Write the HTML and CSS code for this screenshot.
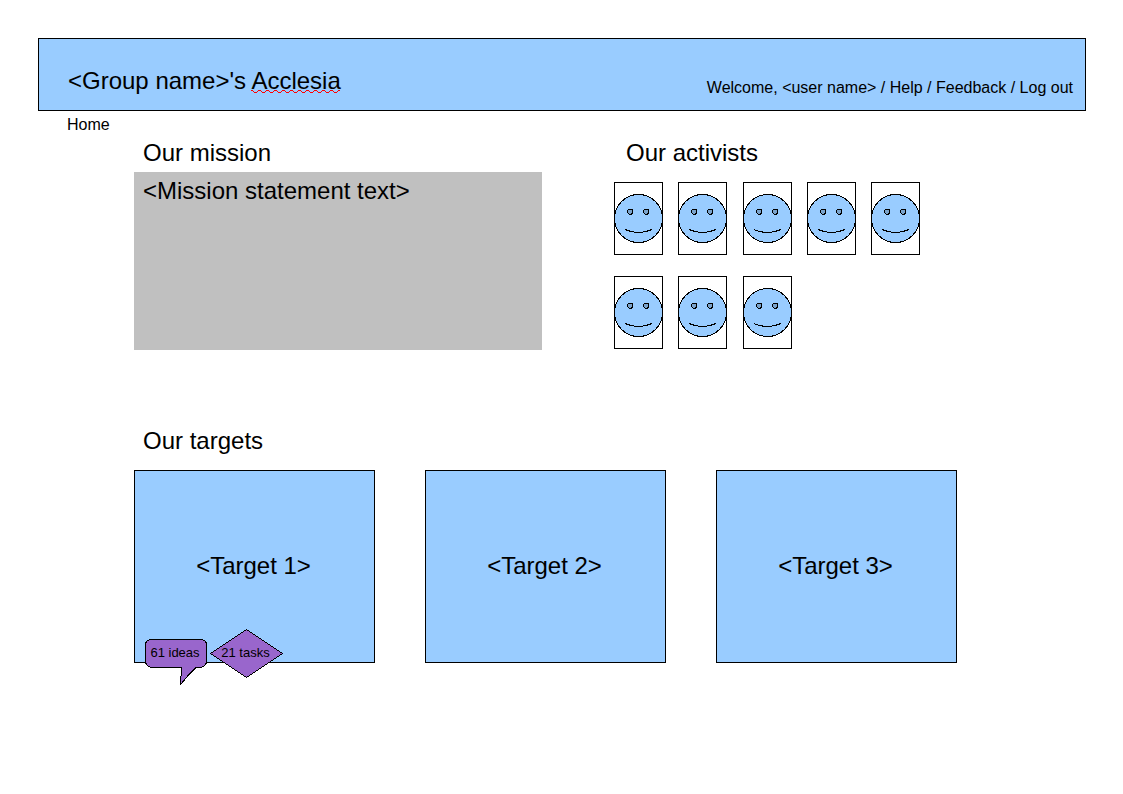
FILE: index.html
```html
<!DOCTYPE html>
<html lang="en">
<head>
<meta charset="utf-8">
<meta name="viewport" content="width=device-width, initial-scale=1">
<title>Acclesia</title>
<link rel="stylesheet" href="styles.css">
</head>
<body>
<svg class="defs" width="0" height="0" aria-hidden="true">
  <symbol id="face" viewBox="0 0 49 49">
    <circle cx="24.5" cy="24.5" r="24" fill="#99ccff" stroke="#000"/>
    <path d="M14.500 15.500H18.500V18.500L17.500 20.500H15.500L13.500 18.500V16.500Z" fill="#7aa3cc" stroke="#000"/>
    <path d="M30.500 15.500H34.500V18.500L33.500 20.500H31.500L29.500 18.500V16.500Z" fill="#7aa3cc" stroke="#000"/>
    <path d="M11 35.5Q24.5 41.5 38 35.5" fill="none" stroke="#000"/>
  </symbol>
</svg>
<header class="banner">
  <h1 class="brand">&lt;Group name&gt;'s <span class="misspelt">Acclesia<svg class="squiggle" height="4" aria-hidden="true"><defs><pattern id="wave" width="8" height="4" patternUnits="userSpaceOnUse"><path d="M0 .5H2M2 1.500H3M3 2.500H6M6 1.500H7M7 .5H8" fill="none" stroke="#f00"/></pattern></defs><rect width="100%" height="4" fill="url(#wave)"/></svg></span></h1>
  <nav class="account">Welcome, &lt;user name&gt; / <a href="#help">Help</a> / <a href="#feedback">Feedback</a> / <a href="#logout">Log out</a></nav>
</header>
<nav class="crumbs"><a href="#home">Home</a></nav>
<main class="content">
  <div class="overview">
    <section>
      <h2 class="heading">Our mission</h2>
      <p class="mission">&lt;Mission statement text&gt;</p>
    </section>
    <section>
      <h2 class="heading heading-activists">Our activists</h2>
      <ul class="activists">
        <li class="activist"><svg class="face"><use href="#face"/></svg></li>
        <li class="activist"><svg class="face"><use href="#face"/></svg></li>
        <li class="activist"><svg class="face"><use href="#face"/></svg></li>
        <li class="activist"><svg class="face"><use href="#face"/></svg></li>
        <li class="activist"><svg class="face"><use href="#face"/></svg></li>
        <li class="activist"><svg class="face"><use href="#face"/></svg></li>
        <li class="activist"><svg class="face"><use href="#face"/></svg></li>
        <li class="activist"><svg class="face"><use href="#face"/></svg></li>
      </ul>
    </section>
  </div>
  <section>
    <h2 class="heading">Our targets</h2>
    <div class="targets">
      <article class="target">&lt;Target 1&gt;
        <div class="badges">
          <span class="badge ideas"><svg class="shape" viewBox="0 0 62 47" aria-hidden="true"><path d="M6 .5H55Q61.500 1 61.500 6V22Q61.500 27.500 55 28.500H51L44 35.500L35.500 45.500L36.500 28.500H7Q.5 27.500 .5 22V6Q.5 1 6 .5Z" fill="#9966cc" stroke="#000"/></svg><span class="label">61 ideas</span></span>
          <span class="badge tasks"><svg class="shape" viewBox="0 0 73 49" aria-hidden="true"><path d="M36.500 .5L72.500 24.500L36.500 48.500L.5 24.500Z" fill="#9966cc" stroke="#000"/></svg><span class="label">21 tasks</span></span>
        </div>
      </article>
      <article class="target">&lt;Target 2&gt;</article>
      <article class="target">&lt;Target 3&gt;</article>
    </div>
  </section>
</main>
</body>
</html>
```

FILE: styles.css
```css
* { box-sizing: border-box; }

body {
  margin: 0;
  padding: 38px 37px 38px 38px;
  background: #fff;
  color: #000;
  font: 24px/28px "Liberation Sans", Arial, sans-serif;
}

h1, h2, p, ul { margin: 0; padding: 0; font: inherit; }
a { color: inherit; text-decoration: none; }
.defs { position: absolute; }
svg { shape-rendering: crispEdges; }

.banner {
  display: flex;
  justify-content: space-between;
  align-items: flex-end;
  gap: 24px;
  padding: 28px 12px 12px 29px;
  background: #99ccff;
  border: 1px solid #000;
}
.brand { padding-bottom: 3px; }

.misspelt { position: relative; }
.squiggle { position: absolute; left: 0; bottom: 0; width: 100%; }

.account, .crumbs { font-size: 16px; line-height: 20px; }
.crumbs { padding: 4px 29px; }

.content { margin: 0 129px 0 96px; }
.overview {
  display: grid;
  grid-template-columns: 408fr 343fr;
  gap: 72px;
}

.heading { padding: 0 9px 5px; }
.heading-activists { padding: 0 12px 15px; }

.mission {
  min-height: 178px;
  padding: 5px 9px;
  background: #c0c0c0;
}

.activists {
  display: grid;
  grid-template-columns: repeat(5, 49px);
  justify-content: space-between;
  row-gap: 21px;
  max-width: 306px;
  list-style: none;
}
.activist {
  display: flex;
  align-items: center;
  height: 73px;
  outline: 1px solid #000;
  outline-offset: -1px;
}
.face { display: block; width: 49px; height: 49px; }

.overview + section { padding-top: 77px; }
.overview + section .heading { padding-bottom: 15px; }

.targets {
  display: grid;
  grid-template-columns: repeat(3, 1fr);
  gap: 50px;
}
.target {
  position: relative;
  display: flex;
  align-items: center;
  justify-content: center;
  min-height: 193px;
  padding: 0 2px 2px 0;
  background: #99ccff;
  border: 1px solid #000;
}

.badges {
  position: absolute;
  left: 10px;
  bottom: -24px;
  display: flex;
  align-items: flex-start;
  gap: 3px;
  font-size: 13px;
  line-height: 16px;
}
.badge { display: grid; justify-items: center; }
.shape, .label { grid-area: 1 / 1; }
.shape { display: block; }
.label { z-index: 1; }
.ideas { padding-top: 10px; }
.ideas .shape { width: 62px; height: 47px; }
.ideas .label { padding: 6px 2px 0 0; }
.tasks { align-items: center; }
.tasks .shape { width: 73px; height: 49px; }
.tasks .label { padding: 0 2px 2px 0; }
```
